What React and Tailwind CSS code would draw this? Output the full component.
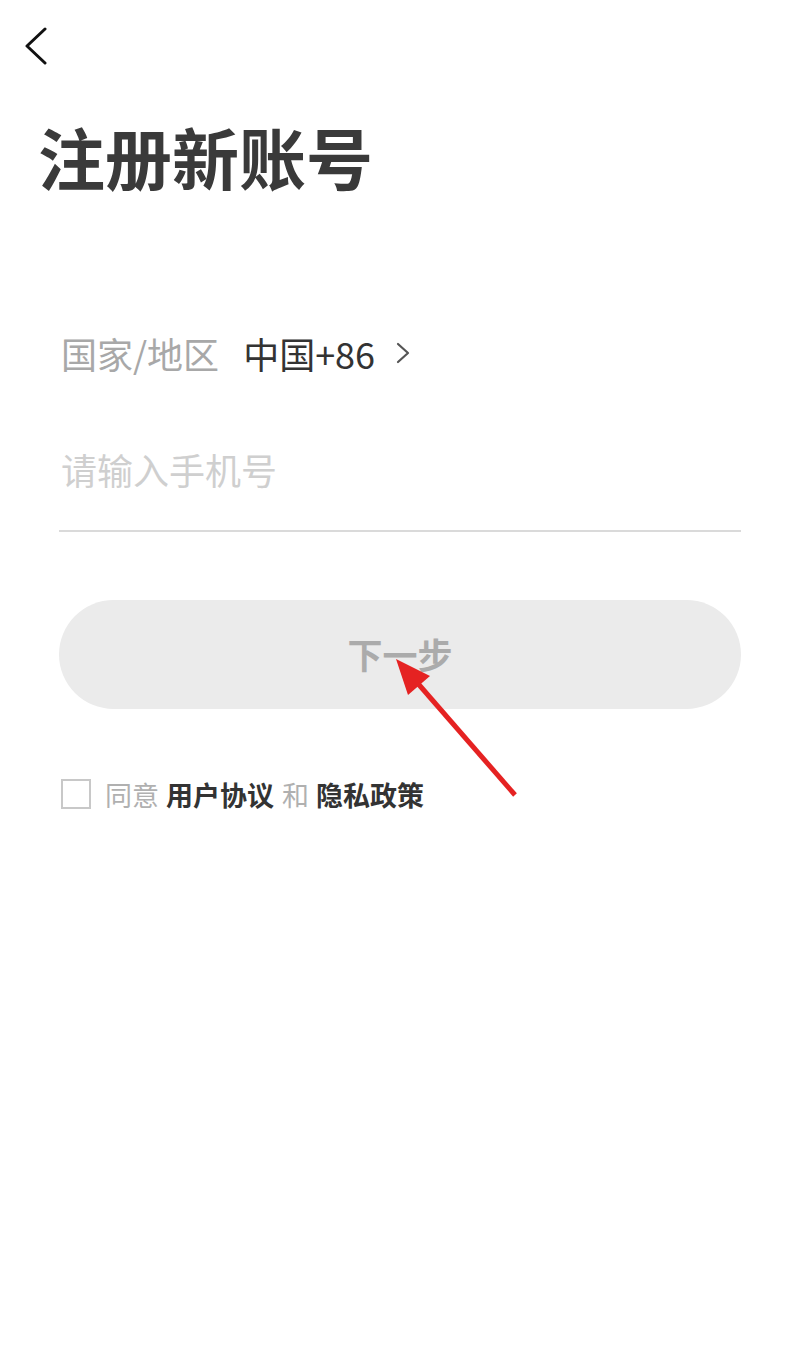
export default function App() {
  const font = { fontFamily: '"Noto Sans CJK SC", "Noto Sans", sans-serif' };
  return (
    <div className="relative min-h-screen w-full bg-white" style={font}>
      {/* back */}
      <div className="pt-[27px] pl-[23px]">
        <svg width="26" height="38" viewBox="0 0 26 38" fill="none">
          <path d="M22 2 L4 19 L22 36" stroke="#111" strokeWidth="3" strokeLinecap="round" strokeLinejoin="round" />
        </svg>
      </div>

      <h1 className="mt-[57px] pl-[38px] text-[67px] font-bold leading-none text-[#3a3a3a]">注册新账号</h1>

      <div className="pl-[59px] pr-[51px]">
        {/* country */}
        <div className="mt-[146px] flex items-center pl-[2px] text-[36px] leading-none">
          <span className="text-[#a8a8a8]">国家/地区</span>
          <span className="ml-[24px] text-[#333]">中国+86</span>
          <svg className="ml-[21px]" width="14" height="22" viewBox="0 0 14 22" fill="none">
            <path d="M2 2 L12 11 L2 20" stroke="#555" strokeWidth="2.2" strokeLinecap="round" strokeLinejoin="round" />
          </svg>
        </div>

        {/* phone */}
        <div className="mt-[80px] border-b-2 border-[#dadada] pb-[40px] pl-[2px]">
          <span className="text-[36px] leading-none text-[#cfcfcf]">请输入手机号</span>
        </div>

        {/* button */}
        <button className="mt-[68px] flex h-[109px] w-full items-center justify-center rounded-full bg-[#ebebeb] text-[35px] font-bold text-[#ababab]">
          下一步
        </button>

        {/* agreement */}
        <div className="mt-[70px] flex items-center pl-[2px] text-[27px] leading-none">
          <span className="h-[30px] w-[30px] border-2 border-[#c8c8c8]" />
          <span className="ml-[14px] text-[#b0b0b0]">同意</span>
          <span className="ml-[7px] font-bold text-[#333]">用户协议</span>
          <span className="ml-[8px] text-[#b0b0b0]">和</span>
          <span className="ml-[7px] font-bold text-[#333]">隐私政策</span>
        </div>
      </div>

      {/* annotation arrow */}
      <svg className="pointer-events-none absolute left-0 top-0" width="792" height="1371">
        <line x1="515" y1="795" x2="414" y2="679" stroke="#e52222" strokeWidth="5" />
        <polygon points="396,659 430,676 408,695" fill="#e52222" />
      </svg>
    </div>
  );
}
